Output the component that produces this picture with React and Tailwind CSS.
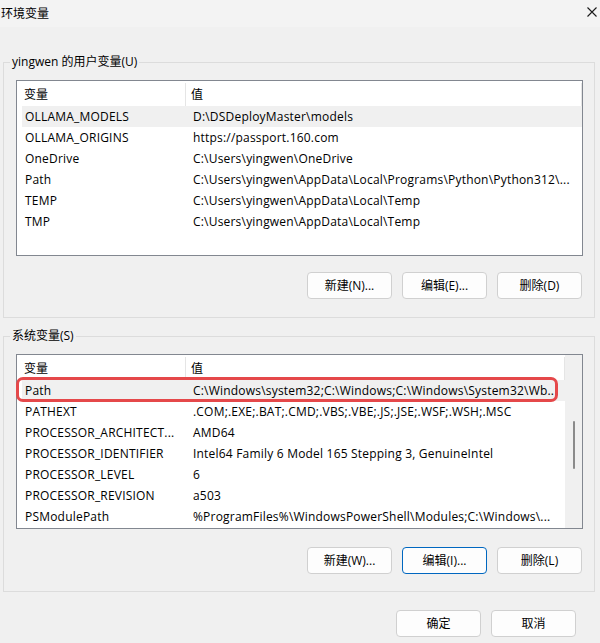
import React from "react";

const userVars = [
  { name: "OLLAMA_MODELS", value: "D:\\DSDeployMaster\\models", selected: true },
  { name: "OLLAMA_ORIGINS", value: "https://passport.160.com" },
  { name: "OneDrive", value: "C:\\Users\\yingwen\\OneDrive" },
  { name: "Path", value: "C:\\Users\\yingwen\\AppData\\Local\\Programs\\Python\\Python312\\..." },
  { name: "TEMP", value: "C:\\Users\\yingwen\\AppData\\Local\\Temp" },
  { name: "TMP", value: "C:\\Users\\yingwen\\AppData\\Local\\Temp" },
];

const systemVars = [
  { name: "Path", value: "C:\\Windows\\system32;C:\\Windows;C:\\Windows\\System32\\Wb..", selected: true },
  { name: "PATHEXT", value: ".COM;.EXE;.BAT;.CMD;.VBS;.VBE;.JS;.JSE;.WSF;.WSH;.MSC" },
  { name: "PROCESSOR_ARCHITECT...", value: "AMD64" },
  { name: "PROCESSOR_IDENTIFIER", value: "Intel64 Family 6 Model 165 Stepping 3, GenuineIntel" },
  { name: "PROCESSOR_LEVEL", value: "6" },
  { name: "PROCESSOR_REVISION", value: "a503" },
  { name: "PSModulePath", value: "%ProgramFiles%\\WindowsPowerShell\\Modules;C:\\Windows\\..." },
];

function Button({ children, focused }) {
  return (
    <button
      type="button"
      className={
        "h-[27px] w-[85px] rounded-[4px] border bg-[#fdfdfd] text-[12px] leading-[16px] text-black " +
        (focused ? "border-[#0067c0]" : "border-[#d0d0d0]")
      }
    >
      {children}
    </button>
  );
}

function ListHeader() {
  return (
    <div className="flex h-[25px] items-center pt-[2px] text-[12px]">
      <div className="flex h-full w-[169px] items-center border-r border-[#e5e5e5] pl-[7px]">变量</div>
      <div className="flex h-full flex-1 items-center border-r border-[#e5e5e5] pl-[5px]">值</div>
    </div>
  );
}

function VarRow({ name, value, selected }) {
  return (
    <div
      className={
        "ml-[5px] flex h-[21px] items-center pt-[1px] text-[12px] leading-[20px] tracking-[0.2px] " +
        (selected ? "bg-[#f0f0f0]" : "")
      }
    >
      <div className="w-[164px] overflow-hidden whitespace-nowrap pl-[3px]">{name}</div>
      <div className="flex-1 overflow-hidden whitespace-nowrap pl-[7px]">{value}</div>
    </div>
  );
}

function GroupBox({ label, className, children }) {
  return (
    <fieldset className={"ml-[3px] w-[592px] border border-[#dcdcdc] " + (className || "")}>
      <legend className="ml-[6px] h-[16px] px-[2px] text-[12px] leading-[16px]">{label}</legend>
      {children}
    </fieldset>
  );
}

export default function App() {
  return (
    <div className="h-[643px] w-[600px] overflow-hidden bg-[#f0f0f0] font-['Open_Sans','Noto_Sans_CJK_SC',sans-serif] text-black">
      {/* title bar */}
      <div className="flex h-[27px] items-center justify-between bg-[#f3f3f3] pl-[1px] pr-[3px]">
        <span className="text-[12px] leading-[16px]">环境变量</span>
        <svg width="10" height="10" viewBox="0 0 10 10" className="mb-[3px]">
          <path d="M0.5 0.5 L9.5 9.5 M9.5 0.5 L0.5 9.5" stroke="#1a1a1a" strokeWidth="1.1" />
        </svg>
      </div>

      <div className="pt-[27px]">
        <GroupBox label="yingwen 的用户变量(U)">
          <div className="pl-[12px] pr-[11px] pb-[18px]">
            <div className="mt-[10px] h-[176px] overflow-hidden border border-[#828790] bg-white">
              <ListHeader />
              {userVars.map((v) => (
                <VarRow key={v.name} {...v} />
              ))}
            </div>
            <div className="mt-[16px] flex justify-end gap-[10px] pr-[1px]">
              <Button>新建(N)...</Button>
              <Button>编辑(E)...</Button>
              <Button>删除(D)</Button>
            </div>
          </div>
        </GroupBox>

        <GroupBox label="系统变量(S)" className="mt-[10px]">
          <div className="pl-[12px] pr-[11px] pb-[17px]">
            <div className="relative mt-[10px] flex h-[175px] border border-[#828790] bg-white">
              <div className="flex-1 overflow-hidden">
                <ListHeader />
                {systemVars.map((v) => (
                  <VarRow key={v.name} {...v} />
                ))}
              </div>
              {/* thin scrollbar */}
              <div className="w-[17px] bg-[#f0f0f0] pt-[66px]">
                <div className="mx-auto h-[48px] w-[2px] rounded-full bg-[#8b8b8b]" />
              </div>
              {/* highlight around the selected Path entry */}
              <div className="absolute left-[-1px] top-[22px] h-[25px] w-[542px] rounded-[7px] border-[3px] border-[#e5484a]" />
            </div>
            <div className="mt-[18px] flex justify-end gap-[10px] pr-[1px]">
              <Button>新建(W)...</Button>
              <Button focused>编辑(I)...</Button>
              <Button>删除(L)</Button>
            </div>
          </div>
        </GroupBox>

        <div className="mt-[18px] flex justify-end gap-[10px] pr-[24px]">
          <Button>确定</Button>
          <Button>取消</Button>
        </div>
      </div>
    </div>
  );
}
